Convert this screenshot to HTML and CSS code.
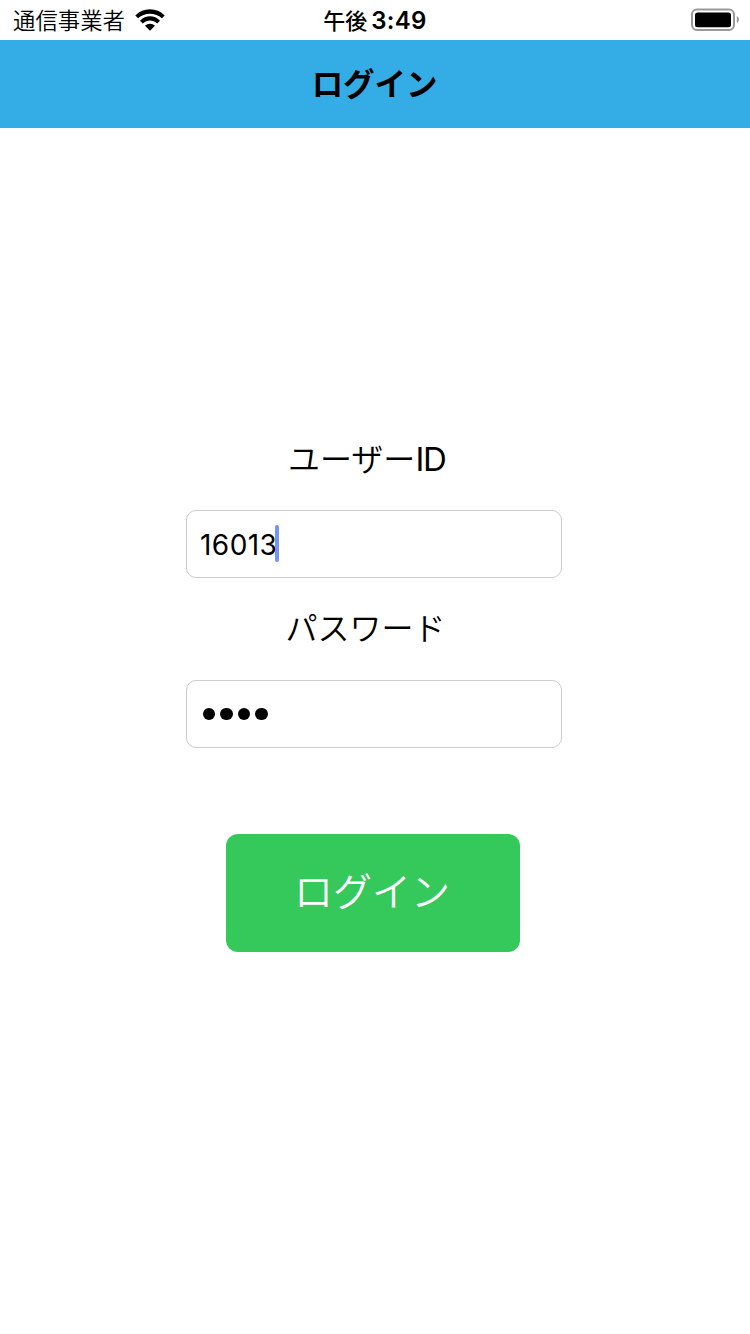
FILE: index.html
```html
<!DOCTYPE html>
<html lang="ja">
<head>
<meta charset="utf-8">
<title>ログイン</title>
<link rel="stylesheet" href="styles.css">
</head>
<body>
<header class="status">
  <div class="carrier"><span class="carrier-name">通信事業者</span>
    <svg class="wifi" viewBox="0 0 30 22" width="30" height="22"><path d="M0.3 6.4C8-1.9 22-1.9 29.7 6.4L26.9 9.2C20.5 3.2 9.5 3.2 3.1 9.2Z"/><path d="M5 11.7C10.5 5.8 19.5 5.8 25 11.7L22.2 14.5C18 10.6 12 10.6 7.8 14.5Z"/><path d="M10 16.8C12.8 14 17.2 14 20 16.8L15 21.8Z"/></svg>
  </div>
  <div class="clock"><span class="period">午後</span><span class="time">3:49</span></div>
  <svg class="battery" viewBox="0 0 50 24" width="50" height="24"><rect x="2" y="1.5" width="42" height="20.4" rx="5" fill="none" stroke="#999" stroke-width="2"/><rect x="5" y="4.5" width="36" height="14.8" rx="2.5"/><path d="M46.8 8Q49 9 49 11.5T46.8 15Z" fill="#999"/></svg>
</header>
<div class="navbar"><h1 class="title">ログイン</h1></div>
<main class="form">
  <div class="label label-user">ユーザー<span class="latin">ID</span></div>
  <div class="field"><span class="value">16013</span><span class="caret"></span></div>
  <div class="label label-pass">パスワード</div>
  <div class="field"><span class="dots"><i class="dot"></i><i class="dot"></i><i class="dot"></i><i class="dot"></i></span></div>
  <button class="submit">ログイン</button>
</main>
</body>
</html>
```
FILE: styles.css
```css
* { box-sizing: border-box; }
body { margin: 0; width: 750px; height: 1334px; background: #fff; color: #000; font-family: Inter, "Noto Sans CJK JP", sans-serif; }
.status { height: 40px; display: grid; grid-template-columns: 1fr auto 1fr; align-items: center; padding: 0 10px 0 13px; }
.carrier { display: flex; align-items: center; gap: 10px; }
.carrier-name { font-size: 22.4px; font-weight: 350; line-height: 40px; padding-top: 1px; }
.wifi { margin-bottom: 1px; }
.clock { display: flex; gap: 4px; line-height: 40px; font-weight: 600; padding: 1px 3px 0 0; }
.period { font-size: 22px; font-weight: 500; }
.time { font-size: 24px; letter-spacing: 0.3px; }
.battery { justify-self: end; margin-bottom: 1px; }
.navbar { height: 88px; background: #34ade6; display: flex; justify-content: center; }
.title { margin: 0; font-size: 31.5px; font-weight: 600; line-height: 88px; padding: 1px 1px 0 0; letter-spacing: -0.1px; }
.form { display: flex; flex-direction: column; align-items: flex-start; padding: 308px 0 0 186px; }
.label { height: 46px; line-height: 46px; font-size: 32px; font-weight: 350; white-space: nowrap; }
.latin { font-size: 33px; font-weight: 400; letter-spacing: -1.2px; }
.label-user { margin: 0 0 28px 102px; }
.label-pass { margin: 28px 0 28px 99.5px; }
.field { width: 376px; height: 68px; border: 1px solid #ccc; border-radius: 10px; padding-left: 13px; display: flex; align-items: center; }
.value { font-size: 28px; letter-spacing: 0.45px; padding-top: 1px; }
.caret { width: 4px; height: 37px; margin: 0 0 1px -2px; background: #7793f5; border-radius: 2px; }
.dots { display: flex; gap: 5px; padding-left: 3px; }
.dot { width: 12.4px; height: 12.4px; border-radius: 50%; background: #000; }
.submit { width: 294px; height: 118px; margin: 86px 0 0 40px; padding: 0 2px 8px 0; border: 0; border-radius: 12px; background: #35c95b; color: #fff; font-family: inherit; font-size: 39px; font-weight: 350; }
```
